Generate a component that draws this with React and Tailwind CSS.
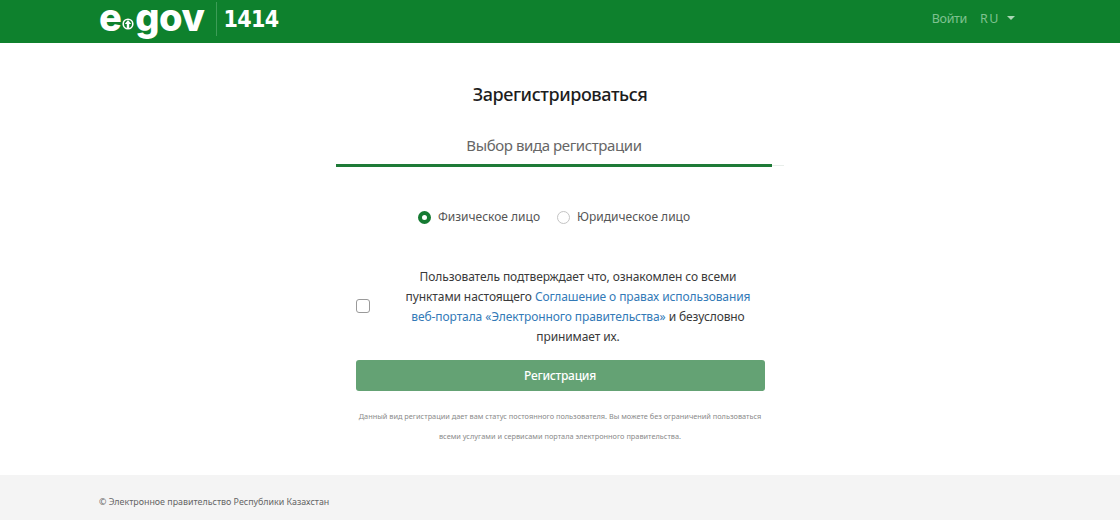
const FONT = "font-['Noto_Sans','Open_Sans',sans-serif]";

function Logo() {
  return (
    <div className="flex items-center h-[43px]">
      <div className="flex items-start font-['Inter',sans-serif] font-extrabold text-white text-[38px] leading-[34px] h-[43px] tracking-[-0.5px]">
        <span>e</span>
        <svg width="12" height="12" viewBox="0 0 15 15" className="mt-[18px] ml-[1px] mr-[1px]">
          <circle cx="7.5" cy="7.5" r="6" fill="none" stroke="#fff" strokeWidth="2" />
          <path d="M7.5 2.5 L11.5 7.5 H9 V13 H6 V7.5 H3.5 Z" fill="#fff" />
        </svg>
        <span>gov</span>
      </div>
      <div className="w-px h-[34px] bg-[#3d9c57] ml-[12px] mr-[6px] mb-[5px]" />
      <span className="font-['DejaVu_Sans_Condensed','DejaVu_Sans',sans-serif] font-bold text-white text-[23px] leading-none tracking-[-0.6px] mb-[5px]">1414</span>
    </div>
  );
}

export default function App() {
  return (
    <div className={`${FONT} h-[520px] flex flex-col bg-white text-[#333]`}>
      <header className="h-[43px] bg-[#0e812d] flex items-center justify-between pl-[99px] pr-[105px]">
        <Logo />
        <nav className="flex items-center text-[12.5px] text-[#7fc190] pb-[5px]">
          <span className="tracking-[-0.3px]">Войти</span>
          <span className="ml-[13px] tracking-[1.5px]">RU</span>
          <span className="ml-[7px] w-0 h-0 border-x-[4px] border-x-transparent border-t-[4px] border-t-[#a9d6b5] mb-[2px]" />
        </nav>
      </header>

      <main className="flex-1 flex flex-col items-center">
        <h1 className="mt-[37px] text-[18px] leading-[28px] font-medium text-[#1d1d1d] tracking-[-0.4px]">
          Зарегистрироваться
        </h1>

        <div className="mt-[25px] w-[448px]">
          <div className="w-[436px] text-center text-[15px] leading-[24px] text-[#666] tracking-[-0.4px] pb-[7px]">Выбор вида регистрации</div>
          <div className="flex h-[3px] items-center">
            <div className="w-[436px] h-[3px] bg-[#1e7a37]" />
            <div className="flex-1 h-px bg-[#e8eeea]" />
          </div>
        </div>

        <div className="mt-[40px] mr-[12px] flex items-center text-[12px] leading-[20px] text-[#555]">
          <span className="w-[13px] h-[13px] rounded-full border-[4px] border-[#157a32] bg-white" />
          <span className="ml-[7px]">Физическое лицо</span>
          <span className="ml-[17px] w-[13px] h-[13px] rounded-full border border-[#c4c4c4] bg-white" />
          <span className="ml-[7px]">Юридическое лицо</span>
        </div>

        <div className="mt-[40px] w-[409px] flex items-center">
          <span className="w-[14px] h-[14px] mb-[2px] shrink-0 rounded-[3px] border border-[#9a9a9a] bg-white" />
          <p className="ml-[26px] mr-[4px] flex-1 text-center text-[12px] leading-[20px] tracking-[-0.1px] text-[#3a3a3a]">
            Пользователь подтверждает что, ознакомлен со всеми пунктами настоящего{" "}
            <a className="text-[#337ab7]">Соглашение о правах использования веб-портала «Электронного правительства»</a>{" "}
            и безусловно принимает их.
          </p>
        </div>

        <button className="mt-[13px] w-[409px] h-[31px] rounded-[3px] bg-[#64a274] text-white text-[12px] font-medium tracking-[-0.3px]">
          Регистрация
        </button>

        <p className="mt-[15px] w-[420px] text-center text-[7.35px] leading-[20px] text-[#8a8a8a]">
          Данный вид регистрации дает вам статус постоянного пользователя. Вы можете без ограничений пользоваться всеми услугами и сервисами портала электронного правительства.
        </p>
      </main>

      <footer className="h-[45px] bg-[#f4f4f4] flex items-center pl-[99px] pt-[8px] text-[8.9px] text-[#666]">
        © Электронное правительство Республики Казахстан
      </footer>
    </div>
  );
}
